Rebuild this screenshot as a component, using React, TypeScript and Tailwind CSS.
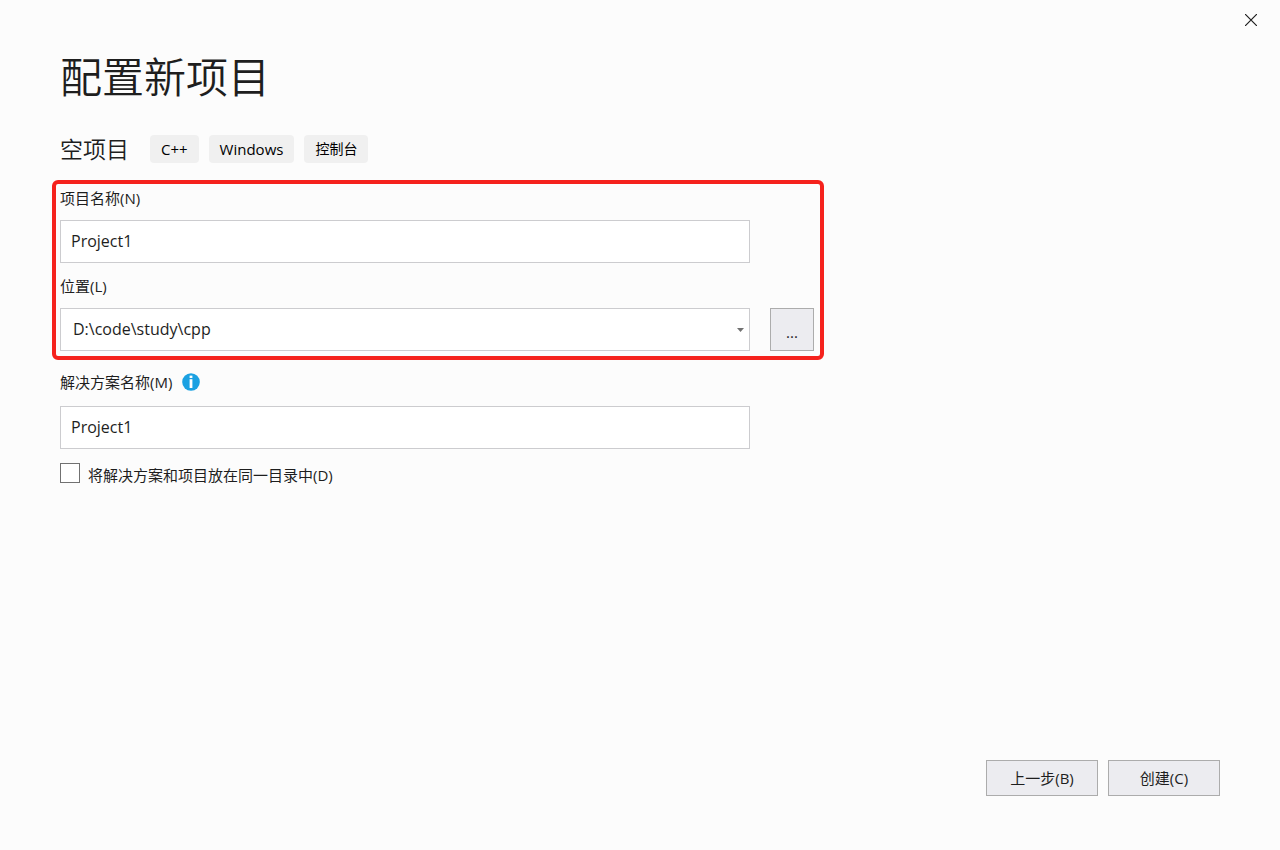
import { useState } from "react";

const TAGS = [
  { name: "C++", size: "text-[15px]" },
  { name: "Windows", size: "text-[15px]" },
  { name: "控制台", size: "text-[14px]" },
];

const FIELD_CLASS =
  "block h-[43px] w-full rounded-none border border-[#cccccf] bg-white pb-[2px] text-[16px] text-[#1e1e1e] outline-none focus:border-[#007acc]";

const BUTTON_CLASS =
  "border border-[#acacac] bg-[#ececf0] text-[#1e1e1e] hover:bg-[#c9def5]";

function CloseIcon() {
  return (
    <svg width="12" height="12" viewBox="0 0 12 12" fill="none" stroke="#1e1e1e" strokeWidth="1.2" aria-hidden="true">
      <path d="M0 0l12 12M12 0L0 12" />
    </svg>
  );
}

function InfoIcon() {
  return (
    <svg width="18" height="18" viewBox="0 0 18 18" aria-hidden="true">
      <circle cx="9" cy="9" r="8.8" fill="#1ba1e2" />
      <rect x="7.6" y="2.6" width="2.8" height="2.4" fill="#fff" />
      <rect x="7.6" y="6.2" width="2.8" height="8.8" fill="#fff" />
    </svg>
  );
}

function ArrowIcon() {
  return (
    <svg
      width="7"
      height="4"
      viewBox="0 0 7 4"
      className="pointer-events-none absolute top-5 right-[6px]"
      aria-hidden="true"
    >
      <path d="M0 0h7L3.5 4z" fill="#717171" />
    </svg>
  );
}

export default function App() {
  const [projectName, setProjectName] = useState("Project1");
  const [solutionName, setSolutionName] = useState("Project1");
  const [sameDirectory, setSameDirectory] = useState(false);

  return (
    <div className="flex min-h-screen flex-col bg-[#fcfcfc] font-['Open_Sans','Noto_Sans_CJK_SC',sans-serif] text-[15px] leading-5 text-[#1e1e1e]">
      <header className="flex justify-end px-[15px]">
        <button type="button" aria-label="关闭" className="flex h-10 w-7 items-center justify-center">
          <CloseIcon />
        </button>
      </header>

      <main className="flex-1 px-[60px] pt-3">
        <h1 className="text-[42px] leading-[50px] font-[350]">配置新项目</h1>

        <div className="mt-[31px] flex items-center gap-[21px]">
          <h2 className="text-[23px] leading-8 font-[350]">空项目</h2>
          <ul className="flex gap-[10px]">
            {TAGS.map((tag) => (
              <li key={tag.name} className={`rounded bg-[#f0f0f0] px-[11px] py-1 leading-5 text-black ${tag.size}`}>
                {tag.name}
              </li>
            ))}
          </ul>
        </div>

        <form>
          <section className="-mx-2 mt-[15px] max-w-[772px] rounded-md border-4 border-[#f5221d] pt-1 pr-[6px] pb-[5px] pl-1">
            <label htmlFor="project-name" className="block">
              项目名称(N)
            </label>
            <div className="mt-3 mr-16">
              <input
                id="project-name"
                type="text"
                value={projectName}
                onChange={(event) => setProjectName(event.target.value)}
                className={`${FIELD_CLASS} px-[10px]`}
              />
            </div>

            <label htmlFor="location" className="mt-[13px] block">
              位置(L)
            </label>
            <div className="mt-3 flex gap-5">
              <div className="relative min-w-0 flex-1">
                <select id="location" className={`${FIELD_CLASS} appearance-none px-3`}>
                  <option>D:\code\study\cpp</option>
                </select>
                <ArrowIcon />
              </div>
              <button type="button" className={`${BUTTON_CLASS} w-11 pt-1`}>
                ...
              </button>
            </div>
          </section>

          <section className="mt-3 max-w-[690px]">
            <div className="flex items-center gap-[10px]">
              <label htmlFor="solution-name">解决方案名称(M)</label>
              <InfoIcon />
            </div>
            <input
              id="solution-name"
              type="text"
              value={solutionName}
              onChange={(event) => setSolutionName(event.target.value)}
              className={`${FIELD_CLASS} mt-[14px] px-[10px]`}
            />
          </section>

          <div className="mt-[14px] flex gap-2">
            <input
              id="same-directory"
              type="checkbox"
              checked={sameDirectory}
              onChange={(event) => setSameDirectory(event.target.checked)}
              className="size-5 appearance-none border border-[#717171] bg-white checked:bg-[#007acc]"
            />
            <label htmlFor="same-directory" className="pt-[2px]">
              将解决方案和项目放在同一目录中(D)
            </label>
          </div>
        </form>
      </main>

      <footer className="flex justify-end gap-[10px] px-[60px] pb-[54px]">
        <button type="button" className={`${BUTTON_CLASS} h-9 w-28`}>
          上一步(B)
        </button>
        <button type="button" className={`${BUTTON_CLASS} h-9 w-28`}>
          创建(C)
        </button>
      </footer>
    </div>
  );
}
